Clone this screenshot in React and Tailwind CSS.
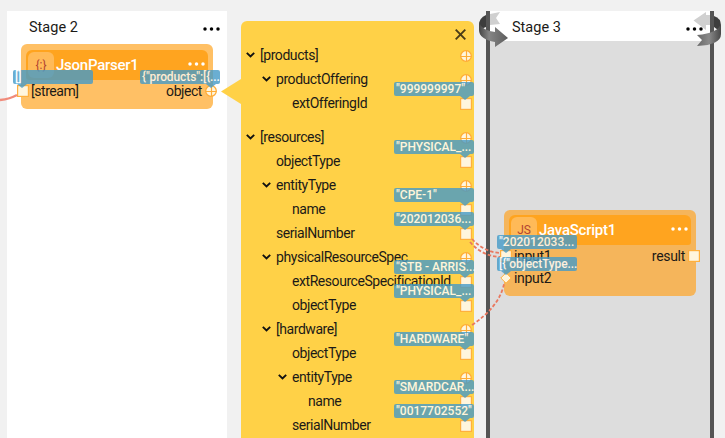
import React from "react";

function Dots({ className }) {
  return (
    <svg width="17" height="4" viewBox="0 0 17 4" className={className} fill="currentColor">
      <circle cx="2" cy="2" r="1.75" />
      <circle cx="8.5" cy="2" r="1.75" />
      <circle cx="15" cy="2" r="1.75" />
    </svg>
  );
}

function Port({ kind = "square" }) {
  return (
    <svg width="12" height="12" viewBox="0 0 12 12" className="shrink-0 overflow-visible">
      {kind === "square" && (
        <rect x="0.6" y="0.6" width="10.8" height="10.8" fill="#fff5dd" stroke="#ffb03d" strokeWidth="1.2" />
      )}
      {kind === "diamond" && (
        <path d="M6 0.8L11.2 6L6 11.2L0.8 6Z" fill="#fff5dd" stroke="#ffb03d" />
      )}
      {kind === "circle" && (
        <g stroke="#ffad38" strokeWidth="1.3">
          <circle cx="6" cy="6" r="5.3" fill="#fff5dd" />
          <path d="M6.5 0.6V11.4M0.6 6.5H11.4" strokeWidth="1.2" />
        </g>
      )}
    </svg>
  );
}

function Tip({ text, side = "right", className }) {
  return (
    <div className={`absolute z-20 h-[14px] w-20 rounded-[2px] bg-[#469bc8] pl-0.5 text-[12px] leading-[14px] font-medium whitespace-nowrap text-white opacity-80 ${className}`}>
      {text}
      <span
        className={`absolute top-[14px] h-[4px] w-2.5 bg-[#469bc8] [clip-path:polygon(0_0,100%_0,50%_100%)] ${side === "left" ? "left-1" : "right-1"}`}
      />
    </div>
  );
}

function Chevron() {
  return (
    <svg width="9" height="6" viewBox="0 0 9 6" className="shrink-0" fill="none" stroke="#111" strokeWidth="1.9">
      <path d="M0.8 0.9L4.5 4.5L8.2 0.9" />
    </svg>
  );
}

const rows = [
  { name: "[products]", pad: "pl-[5px]", open: true },
  { name: "productOffering", pad: "pl-[21px]", open: true },
  { name: "extOfferingId", pad: "pl-[51px]", tip: '"999999997"' },
  { name: "[resources]", pad: "pl-[5px]", open: true, gap: true },
  { name: "objectType", pad: "pl-[35px]", tip: '"PHYSICAL_...' },
  { name: "entityType", pad: "pl-[21px]", open: true },
  { name: "name", pad: "pl-[51px]", tip: '"CPE-1"' },
  { name: "serialNumber", pad: "pl-[35px]", tip: '"202012036...' },
  { name: "physicalResourceSpec", pad: "pl-[21px]", open: true },
  { name: "extResourceSpecificationId", pad: "pl-[51px]", tip: '"STB - ARRIS...' },
  { name: "objectType", pad: "pl-[51px]", tip: '"PHYSICAL_...' },
  { name: "[hardware]", pad: "pl-[21px]", open: true },
  { name: "objectType", pad: "pl-[51px]", tip: '"HARDWARE"' },
  { name: "entityType", pad: "pl-[37px]", open: true },
  { name: "name", pad: "pl-[67px]", tip: '"SMARDCAR...' },
  { name: "serialNumber", pad: "pl-[51px]", tip: '"0017702552"' },
];

function TreeRow({ row }) {
  return (
    <div className={`relative flex h-6 shrink-0 items-center gap-[5px] pr-[3px] ${row.pad} ${row.gap ? "mt-[10px]" : ""}`}>
      {row.open && <Chevron />}
      <span className="text-[14px] leading-6 tracking-[-0.44px] whitespace-nowrap">{row.name}</span>
      <div className="absolute top-[7px] right-[2px]">
        <Port kind={row.open ? "circle" : "square"} />
      </div>
      {row.tip && <Tip text={row.tip} className="-top-[9px] right-0" />}
    </div>
  );
}

function NodeHeader({ icon, title }) {
  return (
    <div className="flex h-[30px] items-center rounded-t-md rounded-b-[3px] bg-[#ffa41f] pr-[3px] pl-0.5">
      <div className="flex h-[26px] w-[26px] items-center justify-center rounded-md bg-[#ffba58] text-[12px] text-[#b34532]">{icon}</div>
      <div className="ml-0.5 flex-1 text-[15px] leading-[30px] font-medium tracking-[-0.25px] text-white">{title}</div>
      <Dots className="-mt-0.5 text-white" />
    </div>
  );
}

export default function App() {
  return (
    <div className="relative flex h-[438px] w-[725px] overflow-hidden bg-[#f1f1f1] pl-[7px] font-[Roboto,sans-serif] text-[14px] text-[#1c1a17]">
      <section className="mt-[11px] w-[220px] bg-white">
        <header className="flex h-[33px] items-center justify-between pr-[7px] pl-[22px]">
          <span className="text-[14.5px]">Stage 2</span>
          <Dots className="mt-[3px] text-black" />
        </header>
        <div className="relative ml-[14px] h-[65px] w-48 rounded-md bg-[#ffc065] px-[5px] pt-[6px]">
          <NodeHeader icon="{:}" title="JsonParser1" />
          <div className="-mr-[9px] -ml-[9px] flex h-[22px] items-center tracking-[-0.44px]">
            <Port />
            <span className="ml-[2px] flex-1">[stream]</span>
            <span className="mr-[3px]">object</span>
            <Port kind="circle" />
          </div>
          <Tip text="[]" side="left" className="top-[26px] -left-2" />
          <Tip text={'{"products":[{...'} className="top-[26px] -right-[7px] tracking-[-0.1px]" />
        </div>
      </section>

      <section className="mt-[21px] ml-[14px] flex w-[233px] flex-col rounded-t-md bg-[#ffd147]">
        <div className="flex h-[22px] shrink-0 items-end justify-end pr-[8px]">
          <svg width="11" height="11" viewBox="0 0 11 11" stroke="#4a3c17" strokeWidth="1.9" className="translate-y-[-3px]">
            <path d="M0.7 0.7L10.3 10.3M10.3 0.7L0.7 10.3" />
          </svg>
        </div>
        {rows.map((row, i) => (
          <TreeRow key={i} row={row} />
        ))}
      </section>

      <section className="mt-[11px] ml-[12px] w-[228px] border-x-4 border-[#555] bg-[#ddd]">
        <header className="flex h-[30px] items-center justify-between bg-white pt-[3px] pr-[7px] pl-[22px]">
          <span className="text-[14.5px]">Stage 3</span>
          <Dots className="relative z-20 mt-[3px] text-black" />
        </header>
        <div className="relative mt-[169px] ml-[14px] h-[86px] w-48 rounded-md bg-[#f5b55b] px-[5px] pt-[5px]">
          <NodeHeader icon="JS" title="JavaScript1" />
          <div className="-mr-[9px] -ml-[9px] flex h-[22px] items-center tracking-[-0.3px]">
            <Port />
            <span className="ml-[2px] flex-1">input1</span>
            <span className="mr-[3px]">result</span>
            <Port />
          </div>
          <div className="-ml-[9px] flex h-[22px] items-center tracking-[-0.3px]">
            <Port kind="diamond" />
            <span className="ml-[2px]">input2</span>
          </div>
          <Tip text={'"202012033...'} side="left" className="top-[25px] -left-[7px]" />
          <Tip text={'[{"objectType...'} side="left" className="top-[47px] -left-[7px] tracking-[-0.1px]" />
        </div>
      </section>

      <svg className="absolute inset-0 z-10" width="725" height="438" fill="none">
        <defs>
          <linearGradient id="ribbonLeft" x1="0" x2="1">
            <stop offset="0" stopColor="#454545" />
            <stop offset="0.35" stopColor="#858585" />
            <stop offset="1" stopColor="#5c5c5c" />
          </linearGradient>
          <linearGradient id="ribbonRight" x1="0" x2="1">
            <stop offset="0" stopColor="#686868" />
            <stop offset="0.5" stopColor="#8a8a8a" />
            <stop offset="1" stopColor="#484848" />
          </linearGradient>
        </defs>
        <path d="M221 91.5L241 79V104Z" fill="#ffd147" />
        <path d="M0 100Q10 99 17 95" stroke="#f08b7b" strokeWidth="2.5" />
        <g stroke="#e9785f" strokeWidth="1.8" strokeDasharray="3.5 2">
          <path d="M472 239Q484 252 500 253" />
          <path d="M470 242Q482 256 500 257" />
          <path d="M472 325C490 313 501 299 504 284" />
        </g>
        <path d="M490 14L500 12L496 18L500 24L490 25Z" fill="#d0d0d0" />
        <path d="M486 15Q479 18 479 25L481 29L486 27Z" fill="#3d3d3d" />
        <path d="M479 22Q481 30 495 32V27L508 38L495 47V42Q479 39 479 30Z" fill="url(#ribbonLeft)" />
        <path d="M710 15H706V12L693.5 20.5L706 30V25H710Z" fill="#d0d0d0" />
        <path d="M714 16Q721 18 721 26L718 30L714 27Z" fill="#3d3d3d" />
        <path d="M721 23Q719 33 697 35L702 40L697 46Q721 45 721 34Z" fill="url(#ribbonRight)" />
      </svg>
    </div>
  );
}
